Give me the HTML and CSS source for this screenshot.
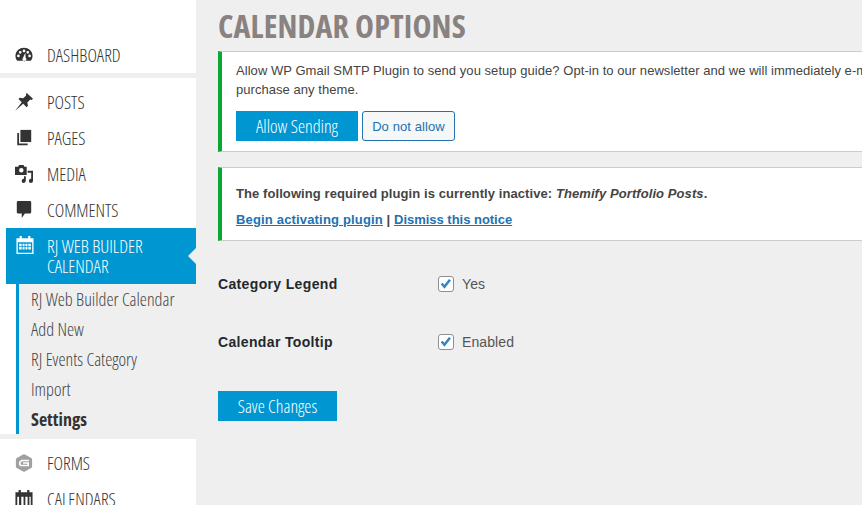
FILE: index.html

```html
<!DOCTYPE html>
<html lang="en">
<head>
  <meta charset="UTF-8" />
  <title>Calendar Options</title>
  <link rel="stylesheet" href="styles.css">
</head>
<body>
  <nav class="sidebar">
    <ul class="menu menu-top">
      <li class="item">
        <svg class="icon" viewBox="0 0 20 20"><path fill-rule="evenodd" d="M10 2C5 2 .5 5.800.5 11c0 2 .7 3.800 2 5.500h15c1.300-1.700 2-3.500 2-5.500 0-5.200-4.500-9-9.500-9zM5.800 5.500a1.500 1.500 0 1 1 0 3 1.500 1.500 0 0 1 0-3zm4.200-1.500a1.500 1.500 0 1 1 0 3 1.500 1.500 0 0 1 0-3zm4.200 1.500a1.500 1.500 0 1 1 0 3 1.500 1.500 0 0 1 0-3zM3.800 9.500a1.500 1.500 0 1 1 0 3 1.500 1.500 0 0 1 0-3zm12.400 0a1.500 1.500 0 1 1 0 3 1.500 1.500 0 0 1 0-3zM11.500 7.500l.3 5.500a2.200 2.200 0 1 1-3 .3z"/></svg>
        <span>DASHBOARD</span>
      </li>
    </ul>
    <ul class="menu menu-main">
      <li class="item">
        <svg class="icon" viewBox="0 0 20 20"><path d="M13 0l7 6.500-1.500 1.200-1.500-.5-3.300 3.300.7 3.800-1.500 1.500-3.800-3.800L0 20l7.500-9.800-3.700-3.400 1.500-1.500 3.800.6 3.300-3.200-.2-1.500z"/></svg>
        <span>POSTS</span>
      </li>
      <li class="item">
        <svg class="icon" viewBox="0 0 20 20"><path d="M6 1h12v13.500H6z"/><path d="M2.500 4.500h2v11.700H14V18H2.500z"/></svg>
        <span>PAGES</span>
      </li>
      <li class="item">
        <svg class="icon" viewBox="0 0 20 20"><path fill-rule="evenodd" d="M4.500 0h5l1 2H13v9H0V2h3.500zM7 3.200a2.500 2.500 0 1 0 0 5 2.500 2.500 0 0 0 0-5z"/><path d="M14 6.500h6v11a2.300 2.300 0 1 1-2-2.200V8.500h-4z"/><path d="M12 12.500v5a2.300 2.300 0 1 1-2-2.200v-2.800z"/></svg>
        <span>MEDIA</span>
      </li>
      <li class="item">
        <svg class="icon" viewBox="0 0 20 20"><path d="M3.500 0h13A1.500 1.500 0 0 1 18 1.500v11a1.500 1.500 0 0 1-1.500 1.500H11l-3.500 5v-5h-4A1.500 1.500 0 0 1 2 12.500v-11A1.500 1.500 0 0 1 3.500 0z"/></svg>
        <span>COMMENTS</span>
      </li>
      <li class="item item-active">
        <svg class="icon" viewBox="0 0 20 20"><path fill-rule="evenodd" d="M4 0h2.500v2.500h7V0H16v2.500h3.500V20H.500V2.500H4zM2 7v11.500h16V7zm1.500 1.500h2.800v2.800H3.500zm3.800 0h2.200v2.800H7.300zm3.200 0h2.200v2.800h-2.200zm3.200 0h2.800v2.800h-2.800zm-10.200 3.800h2.800v2.800H3.500zm3.800 0h2.200v2.800H7.300zm3.200 0h2.200v2.800h-2.200zm3.200 0h2.800v2.800h-2.800z"/></svg>
        <span>RJ WEB BUILDER CALENDAR</span>
      </li>
      <li>
        <ul class="submenu">
          <li>RJ Web Builder Calendar</li>
          <li>Add New</li>
          <li>RJ Events Category</li>
          <li>Import</li>
          <li class="current">Settings</li>
        </ul>
      </li>
    </ul>
    <ul class="menu menu-bottom">
      <li class="item">
        <svg class="icon icon-forms" viewBox="0 0 20 20"><path d="M9 .5a2 2 0 0 1 2 0l7 4a2 2 0 0 1 1 1.700v7.600a2 2 0 0 1-1 1.700l-7 4a2 2 0 0 1-2 0l-7-4a2 2 0 0 1-1-1.700V6.200a2 2 0 0 1 1-1.700z"/><path class="forms-g" d="M15.500 7.200H7.500L5.300 9.400v2.200l1.200 1.200h8.200V10H9"/></svg>
        <span>FORMS</span>
      </li>
      <li class="item">
        <svg class="icon" viewBox="0 0 20 20"><path fill-rule="evenodd" d="M4 0h2.500v2.500h7V0H16v2.500h3.500V20H.500V2.500H4zM2.500 7.500V18h2V7.500zm4.500 0V18h2.500V7.500zm4.500 0V18H14V7.500zm4.500 0V18h1.500V7.500z"/></svg>
        <span>CALENDARS</span>
      </li>
    </ul>
  </nav>

  <main class="content">
    <h1>CALENDAR OPTIONS</h1>

    <div class="notice notice-optin">
      <p>Allow WP Gmail SMTP Plugin to send you setup guide? Opt-in to our newsletter and we will immediately e-mail you a setup guide along with 20% discount which you can use to purchase any theme.</p>
      <div class="notice-buttons">
        <button class="btn-primary btn-allow">Allow Sending</button>
        <button class="btn-outline">Do not allow</button>
      </div>
    </div>

    <div class="notice notice-plugin">
      <p class="plugin-line"><strong>The following required plugin is currently inactive: <em>Themify Portfolio Posts</em>.</strong></p>
      <p class="plugin-links"><strong><a class="link-begin" href="#">Begin activating plugin</a> | <a class="link-dismiss" href="#">Dismiss this notice</a></strong></p>
    </div>

    <div class="options">
      <div class="option">
        <label class="option-name">Category Legend</label>
        <span class="check"><svg viewBox="0 0 16 16"><path d="M3 7.500l3.200 3.700 6.300-8" /></svg></span>
        <span class="option-value">Yes</span>
      </div>
      <div class="option">
        <label class="option-name">Calendar Tooltip</label>
        <span class="check"><svg viewBox="0 0 16 16"><path d="M3 7.500l3.200 3.700 6.300-8" /></svg></span>
        <span class="option-value">Enabled</span>
      </div>
    </div>

    <button class="btn-primary btn-save">Save Changes</button>
  </main>
</body>
</html>
```

FILE: styles.css

```css
html, body {
  margin: 0;
  height: 505px;
  overflow: hidden;
}

body {
  display: flex;
  background-color: #efefef;
  font-family: "Liberation Sans", Arial, sans-serif;
  color: #444;
}

ul {
  list-style: none;
  margin: 0;
  padding: 0;
}

/* sidebar */
.sidebar {
  flex: 0 0 196px;
  width: 196px;
  font-family: "Open Sans", sans-serif;
  font-stretch: 75%;
  font-weight: 300;
}

.menu {
  background-color: #fff;
}

.menu-top {
  height: 73px;
  padding-top: 37px;
  box-sizing: border-box;
  margin-bottom: 5px;
}

.menu-main {
  padding-top: 6px;
}

.menu-bottom {
  margin-top: 5px;
  padding-top: 6px;
  height: 61px;
}

.item {
  display: flex;
  align-items: center;
  height: 36px;
  padding-left: 15px;
  font-size: 18px;
  line-height: 20px;
  color: #333;
}

.icon {
  flex: 0 0 18px;
  width: 18px;
  height: 18px;
  margin-right: 14px;
  fill: #333;
}

.icon-forms {
  fill: #a0a0a0;
}

.forms-g {
  fill: none;
  stroke: #fff;
  stroke-width: 1.800;
}

.item-active {
  position: relative;
  height: 56px;
  margin-left: 6px;
  padding-left: 10px;
  background-color: #0096d2;
  color: #fff;
}

.item-active .icon {
  fill: #fff;
  margin-top: -22px;
  margin-right: 13px;
}

.item-active span {
  width: 130px;
}

.item-active::after {
  content: "";
  position: absolute;
  right: 0;
  top: 20px;
  border: 8px solid transparent;
  border-right-color: #efefef;
  border-left-width: 0;
}

.submenu {
  margin-left: 16px;
  padding-left: 12px;
  border-left: 3px solid #0096d2;
  background-color: #efefef;
  width: 190px;
  box-sizing: border-box;
  font-size: 18px;
  color: #444;
}

.submenu li {
  height: 30px;
  line-height: 30px;
}

.submenu .current {
  font-weight: 700;
  color: #333;
}

/* content */
.content {
  flex: 1;
  min-width: 0;
  padding-left: 22px;
}

h1 {
  margin: 8px 0 7px;
  font-family: "Open Sans", sans-serif;
  font-stretch: 75%;
  font-size: 32px;
  line-height: 36px;
  font-weight: 700;
  letter-spacing: .15px;
  color: #8a8280;
}

.notice {
  width: 1060px;
  box-sizing: border-box;
  background-color: #fff;
  border: 1px solid #ccc;
  border-left: 4px solid #0aa832;
  font-size: 13px;
  padding-left: 14px;
}

.notice p {
  margin: 0;
}

.notice-optin {
  height: 101px;
  padding-top: 9px;
  line-height: 19px;
  letter-spacing: .05px;
}

.notice-buttons {
  display: flex;
  gap: 4px;
  margin-top: 12px;
}

.btn-primary {
  border: none;
  background-color: #0096d2;
  color: #fff;
  font-family: "Open Sans", sans-serif;
  font-stretch: 75%;
  font-weight: 300;
  padding: 0;
}

.btn-allow {
  width: 122px;
  height: 30px;
  font-size: 18px;
}

.btn-outline {
  width: 93px;
  height: 30px;
  padding: 0;
  border: 1px solid #2271b1;
  border-radius: 3px;
  background-color: #f6f7f7;
  color: #2271b1;
  font-family: "Liberation Sans", Arial, sans-serif;
  font-size: 13px;
  letter-spacing: .1px;
}

.notice-plugin {
  height: 74px;
  margin-top: 15px;
  padding-top: 16px;
  line-height: 19px;
  letter-spacing: .08px;
}

.notice-plugin .plugin-links {
  margin-top: 7px;
}

.notice a {
  color: #2271b1;
}

.notice .link-begin {
  letter-spacing: .17px;
}

.notice .link-dismiss {
  letter-spacing: -.02px;
}

.options {
  margin-top: 14px;
}

.option {
  display: flex;
  align-items: center;
  height: 58px;
  font-size: 14px;
}

.option-name {
  width: 220px;
  font-weight: 700;
  color: #23282d;
  letter-spacing: .35px;
}

.check {
  width: 16px;
  height: 16px;
  box-sizing: border-box;
  border: 1px solid #8c8f94;
  border-radius: 3px;
  background-color: #fff;
  margin-right: 8px;
}

.check svg {
  display: block;
  width: 14px;
  height: 14px;
  fill: none;
  stroke: #3582c4;
  stroke-width: 2.800;
}

.option-value {
  letter-spacing: .1px;
  color: #555;
}

.btn-save {
  display: block;
  width: 119px;
  height: 30px;
  margin-top: 20px;
  font-size: 18px;
}
```
